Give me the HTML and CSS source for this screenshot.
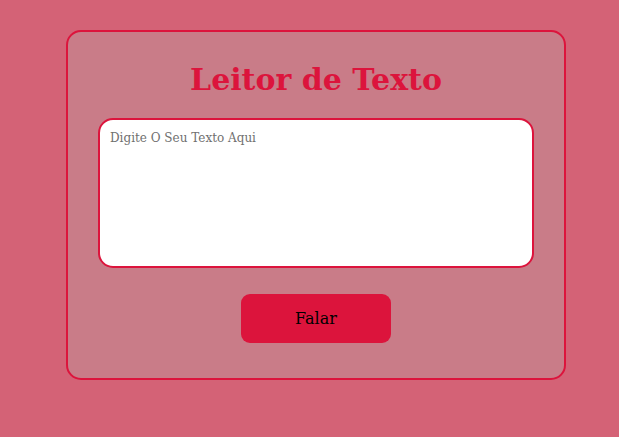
FILE: index.html
```html
<!DOCTYPE html>
<html lang="pt">
<head>
<meta charset="utf-8">
<title>Leitor de Texto</title>
<link rel="stylesheet" href="styles.css">
</head>
<body>
<div class="page">
  <div class="card">
    <h1 class="title">Leitor de Texto</h1>
    <textarea class="input" placeholder="Digite O Seu Texto Aqui"></textarea>
    <button class="btn">Falar</button>
  </div>
</div>
</body>
</html>
```
FILE: styles.css
```css
html, body {
  margin: 0;
  padding: 0;
  background: #d46276;
  height: 100%;
}
.page {
  padding: 30px 0 0 66px;
}
.card {
  box-sizing: border-box;
  width: 500px;
  height: 350px;
  border: 2px solid #dc143c;
  border-radius: 15px;
  background: #c97c88;
  display: flex;
  flex-direction: column;
  align-items: center;
  padding: 30px 30px 0;
}
.title {
  margin: 0;
  font-family: "DejaVu Serif", Georgia, serif;
  font-weight: bold;
  font-size: 30px;
  line-height: 36px;
  color: #dc143c;
}
.input {
  box-sizing: border-box;
  margin-top: 20px;
  width: 436px;
  height: 150px;
  border: 2px solid #dc143c;
  border-radius: 15px;
  background: #fff;
  padding: 11px 10px 9px;
  font-family: "DejaVu Serif", Georgia, serif;
  font-size: 12px;
  resize: none;
  outline: none;
}
.input::placeholder {
  color: #707070;
}
.btn {
  margin-top: 26px;
  width: 150px;
  height: 49px;
  border: none;
  border-radius: 9px;
  background: #dc143c;
  color: #000;
  font-family: "DejaVu Serif", Georgia, serif;
  font-size: 16px;
}
```
